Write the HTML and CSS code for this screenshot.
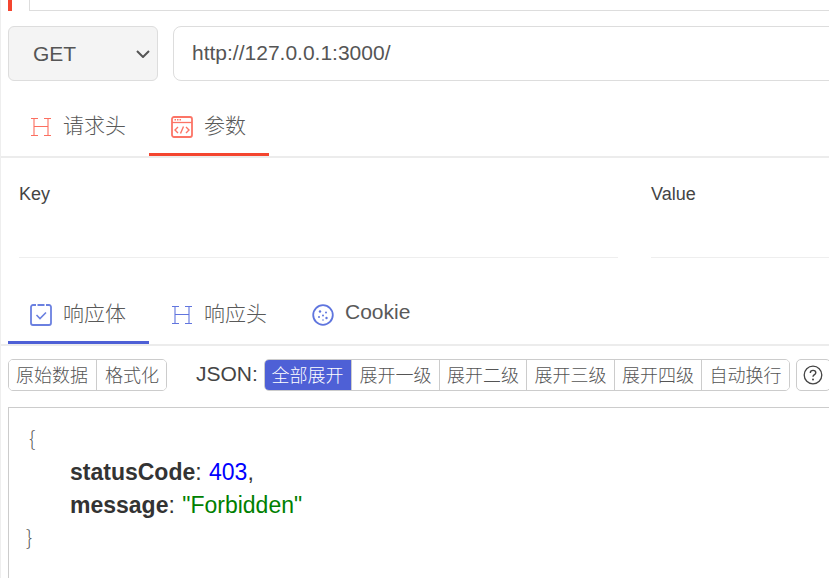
FILE: index.html
```html
<!DOCTYPE html>
<html lang="zh">
<head>
<meta charset="utf-8">
<title>HTTP</title>
<link rel="stylesheet" href="styles.css">
</head>
<body>
<div class="page">
  <div class="topstrip"><span class="redmark"></span><span class="topbox"></span></div>
  <div class="request">
    <div class="select"><span>GET</span>
      <svg class="chev" width="14" height="8" viewBox="0 0 14 8"><path d="M1 1l6 6 6-6" fill="none" stroke="#555" stroke-width="2"/></svg>
    </div>
    <div class="url">http://127.0.0.1:3000/</div>
  </div>
  <div class="tabs req">
    <div class="tab"><svg class="ico" width="22" height="20" viewBox="0 0 22 20"><path d="M1 1.5h7M14 1.5h7M1 18.5h7M14 18.5h7M4 1.5v17M18 1.5v17M4 9.5h14" fill="none" stroke="#fc6f60" stroke-width="1.1"/></svg><span>请求头</span></div>
    <div class="tab on-red"><svg class="ico" width="22" height="22" viewBox="0 0 22 22"><rect x="1" y="1" width="20" height="20" rx="2" fill="none" stroke="#fc7466" stroke-width="1.8"/><path d="M1 6.5h20" stroke="#fc7466" stroke-width="1.3"/><path d="M3.5 3.8h1.5M6 3.8h1.5M8.5 3.8h1.5" stroke="#fc7466" stroke-width="1.4"/><path d="M7 11l-3 3 3 3M15 11l3 3-3 3M12.5 10.5l-3 7" fill="none" stroke="#fc7466" stroke-width="1.4"/></svg><span>参数</span></div>
  </div>
  <div class="params">
    <div class="param key"><div class="label">Key</div><div class="field"></div></div>
    <div class="param value"><div class="label">Value</div><div class="field"></div></div>
  </div>
  <div class="tabs res">
    <div class="tab on-blue"><svg class="ico" width="22" height="22" viewBox="0 0 22 22"><path d="M6 1H3a2 2 0 0 0-2 2v16a2 2 0 0 0 2 2h16a2 2 0 0 0 2-2V3a2 2 0 0 0-2-2h-3M7.5 1h7" fill="none" stroke="#6b80e0" stroke-width="1.8"/><path d="M6.5 11l3.5 3.5 6-6" fill="none" stroke="#6b80e0" stroke-width="1.6"/></svg><span>响应体</span></div>
    <div class="tab"><svg class="ico" width="22" height="20" viewBox="0 0 22 20"><path d="M1 1.5h7M14 1.5h7M1 18.5h7M14 18.5h7M4 1.5v17M18 1.5v17M4 9.5h14" fill="none" stroke="#6175de" stroke-width="1.1"/></svg><span>响应头</span></div>
    <div class="tab"><svg class="ico" width="22" height="22" viewBox="0 0 22 22"><circle cx="11" cy="11" r="9.8" fill="none" stroke="#5f75de" stroke-width="1.8"/><g fill="#5f75de"><circle cx="8" cy="7.5" r="1.2"/><circle cx="14" cy="8.5" r="1"/><circle cx="11" cy="11.5" r="1"/><circle cx="7" cy="13" r="1"/><circle cx="14.5" cy="14" r="1.2"/><circle cx="11" cy="16" r=".8"/></g></svg><span>Cookie</span></div>
  </div>
  <div class="toolbar">
    <div class="group">
      <button class="btn">原始数据</button><button class="btn">格式化</button>
    </div>
    <span class="json-label">JSON:</span>
    <div class="group levels">
      <button class="btn active">全部展开</button><button class="btn">展开一级</button><button class="btn">展开二级</button><button class="btn">展开三级</button><button class="btn">展开四级</button><button class="btn">自动换行</button>
    </div>
    <button class="help"><svg width="20" height="20" viewBox="0 0 20 20"><circle cx="10" cy="10" r="8.8" fill="none" stroke="#444" stroke-width="1.3"/><path d="M7.3 8c0-1.6 1.2-2.6 2.8-2.6s2.7 1 2.7 2.3c0 1.9-2.8 2-2.8 4.1" fill="none" stroke="#444" stroke-width="1.4"/><circle cx="10" cy="14.6" r="1" fill="#444"/></svg></button>
  </div>
  <div class="viewer">
    <div class="brace open">{</div>
    <div class="line"><b>statusCode</b>: <span class="num">403</span>,</div>
    <div class="line"><b>message</b>: <span class="str">"Forbidden"</span></div>
    <div class="brace close">}</div>
  </div>
</div>
</body>
</html>
```
FILE: styles.css
```css
* { box-sizing: border-box; }
html, body { margin: 0; padding: 0; height: 100%; overflow: hidden; background: #fff; }
body { font-family: "Liberation Sans", "Noto Sans CJK SC", sans-serif; color: #555; }
.page { width: 829px; height: 578px; overflow: hidden; padding-left: 8px; border-left: 1px solid #eee; }
.topstrip { display: flex; height: 11px; margin: 0 -30px 0 -1px; }
.redmark { width: 4px; height: 11px; background: #f4452f; }
.topbox { margin-left: 17px; flex: 1; border-left: 1px solid #ddd; border-bottom: 1px solid #ddd; }
.request { display: flex; gap: 15px; margin: 15px -30px 0 -1px; height: 55px; }
.select { width: 150px; display: flex; align-items: center; justify-content: space-between; padding: 0 7px 0 24px; background: #f4f4f4; border: 1px solid #ddd; border-radius: 6px; font-size: 21px; color: #555; }
.url { flex: 1; display: flex; align-items: center; padding: 0 18px 1px; border: 1px solid #ddd; border-radius: 8px; font-size: 21px; color: #555; }
.tabs { display: flex; height: 58px; margin-left: -9px; padding-left: 8px; border-bottom: 2px solid #ececec; }
.tabs.req { margin-top: 19px; }
.tabs.res { margin-top: 30px; }
.tab { display: flex; align-items: center; gap: 11px; padding: 0 23px 0 22px; font-size: 21px; font-weight: 300; color: #595959; border-bottom: 3px solid transparent; }
.tab span { position: relative; top: -3px; }
.on-red { border-bottom-color: #f4452f; }
.on-blue { border-bottom-color: #4e60d6; }
.params { display: flex; margin-left: -9px; padding-left: 19px; }
.param { padding-top: 24px; }
.key { width: 599px; flex: none; }
.value { width: 200px; margin-left: 33px; flex: none; }
.label { font-size: 18px; color: #444; line-height: 24px; }
.field { height: 52px; border-bottom: 1px solid #eee; }
.toolbar { display: flex; align-items: center; height: 32px; margin: 13px -30px 0 -1px; }
.group { display: flex; height: 32px; border: 1px solid #ccc; border-radius: 5px; overflow: hidden; }
.btn { font: 300 18px "Liberation Sans", "Noto Sans CJK SC", sans-serif; color: #555; height: 100%; padding: 0 8px 2px; background: #fff; border: 0; border-left: 1px solid #ccc; margin: 0; white-space: nowrap; }
.btn:first-child { border-left: 0; padding-left: 7px; }
.btn:last-child { padding-right: 7px; }
.levels .btn { padding: 0 7.25px 2px; }
.levels .btn.active { background: #4e60d6; color: #fff; margin: -1px 0 -1px -1px; height: 32px; padding: 0 7.75px 2px; }
.json-label { font-size: 21px; color: #444; margin: 0 6px 2px 29px; }
.help { width: 35px; height: 32px; margin-left: 6px; padding: 0; border: 1px solid #ccc; border-radius: 5px; background: #fff; display: flex; align-items: center; justify-content: center; flex: none; }
.viewer { margin: 16px -30px 0 -1px; height: 171px; padding: 13px 20px; border: 1px solid #ccc; border-right: 0; border-bottom: 0; font-size: 23px; line-height: 33px; color: #333; }
.brace { font-family: "Noto Sans CJK SC", sans-serif; font-size: 20px; font-weight: 300; color: #555; }
.open { margin-bottom: 2px; }
.close { margin: -2px 0 0 -3px; }
.line { padding-left: 41px; }
.line b { font-weight: 700; }
.num, .str { margin-left: 1px; }
.num { color: #00f; }
.str { color: #008000; }
```
